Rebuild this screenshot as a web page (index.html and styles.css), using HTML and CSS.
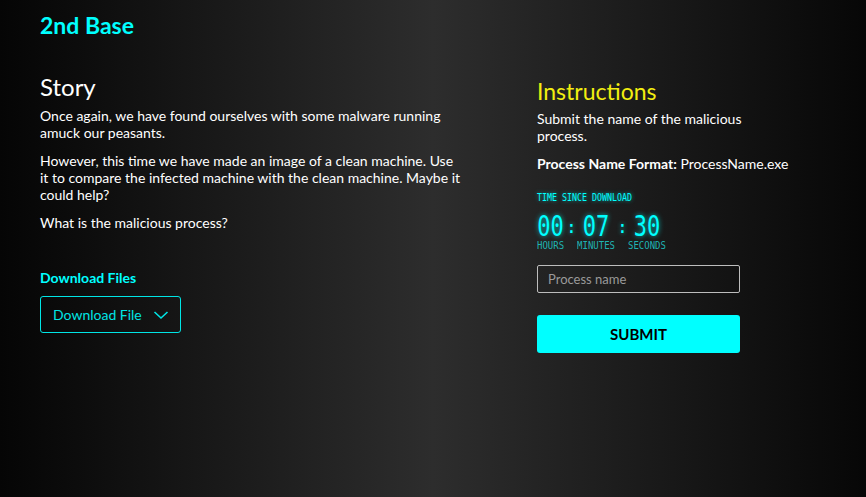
FILE: index.html
```html
<!DOCTYPE html>
<html>
<head>
<meta charset="utf-8">
<link rel="stylesheet" href="styles.css">
</head>
<body>
<div class="page">
  <header class="brand">2nd Base</header>
  <div class="columns">
    <section class="story">
      <h2 class="story-title">Story</h2>
      <p>Once again, we have found ourselves with some malware running amuck our peasants.</p>
      <p>However, this time we have made an image of a clean machine. Use it to compare the infected machine with the clean machine. Maybe it could help?</p>
      <p>What is the malicious process?</p>
      <h3 class="dl-title">Download Files</h3>
      <button class="dl-btn"><span>Download File</span>
        <svg class="chev" width="16" height="10" viewBox="0 0 16 10"><path d="M1.5 2 L8 8 L14.5 2" fill="none" stroke="#00e5e5" stroke-width="1.6"/></svg>
      </button>
    </section>
    <section class="instr">
      <h2 class="instr-title">Instructions</h2>
      <p class="instr-text">Submit the name of the malicious process.</p>
      <p class="format"><b>Process Name Format:</b> ProcessName.exe</p>
      <div class="timer">
        <div class="timer-label">TIME SINCE DOWNLOAD</div>
        <div class="digits">
          <div class="unit"><span class="num">00</span><span class="cap">HOURS</span></div>
          <span class="colon">:</span>
          <div class="unit"><span class="num">07</span><span class="cap">MINUTES</span></div>
          <span class="colon">:</span>
          <div class="unit"><span class="num">30</span><span class="cap">SECONDS</span></div>
        </div>
      </div>
      <input class="proc" type="text" placeholder="Process name">
      <button class="submit">SUBMIT</button>
    </section>
  </div>
</div>
</body>
</html>
```
FILE: styles.css
```css
* { box-sizing: border-box; }
html, body { margin: 0; height: 100%; }
body {
  background: linear-gradient(90deg, #050505 0%, #2d2d2d 50%, #070707 100%);
  color: #fff;
  font-family: "Lato", "Liberation Sans", sans-serif;
  font-size: 14px;
}
.page { padding: 11px 40px 0 40px; }
.brand {
  color: #00ffff;
  font-weight: 700;
  font-size: 23px;
  line-height: 28px;
}
.columns {
  display: flex;
  margin-top: 35px;
}
.story { width: 421px; }
.story-title {
  margin: 0 0 7px;
  font-weight: 400;
  font-size: 24px;
  line-height: 26px;
}
.story p { margin: 0 0 10px; line-height: 17px; }
.story p + p { margin-top: 11px; }
.dl-title {
  margin: 38px 0 10px;
  color: #00ffff;
  font-size: 14px;
  font-weight: 700;
  line-height: 17px;
}
.dl-btn {
  display: flex;
  align-items: center;
  justify-content: space-between;
  height: 37px;
  width: 141px;
  padding: 0 11px 0 12px;
  background: transparent;
  border: 1px solid #00e5e5;
  border-radius: 3px;
  color: #00e5e5;
  font-family: inherit;
  font-size: 14px;
  white-space: nowrap;
}
.instr { margin-left: 76px; width: 203px; }
.instr-title {
  margin: 4px 0 6px;
  color: #f2ee10;
  font-weight: 400;
  font-size: 23px;
  line-height: 26px;
}
.instr-text { margin: 0 0 11px; line-height: 17px; width: 215px; }
.format { margin: 0 0 19px; line-height: 17px; white-space: nowrap; }
.timer { color: #00ffff; font-family: "DejaVu Sans Mono", monospace; }
.timer-label {
  font-size: 8.3px;
  line-height: 10px;
  transform: scaleY(1.25);
  transform-origin: left top;
  text-shadow: 0 0 4px rgba(0,255,255,.6);
}
.digits { display: flex; align-items: flex-start; margin-top: 13px; gap: 2px; }
.unit { display: flex; flex-direction: column; align-items: center; }
.num {
  display: inline-block;
  font-size: 22px;
  line-height: 26px;
  transform: scaleY(1.25);
  text-shadow: 0 0 5px rgba(0,255,255,.7);
}
.colon {
  width: 9px;
  text-align: center;
  font-size: 18px;
  line-height: 26px;
  text-shadow: 0 0 4px rgba(0,255,255,.7);
}
.cap {
  margin-top: 1px;
  font-size: 9px;
  line-height: 10px;
  color: #1fb3b3;
  display: inline-block;
  transform: scaleY(1.1);
}
.proc {
  display: block;
  margin-top: 14px;
  width: 203px;
  height: 28px;
  padding: 0 10px;
  background: transparent;
  border: 1px solid #bdbdbd;
  border-radius: 2px;
  color: #fff;
  font-family: inherit;
  font-size: 13px;
}
.proc::placeholder { color: #9a9a9a; }
.submit {
  display: block;
  margin-top: 22px;
  width: 203px;
  height: 38px;
  background: #00ffff;
  border: none;
  border-radius: 3px;
  color: #000;
  font-family: inherit;
  font-weight: 700;
  font-size: 15px;
}
```
